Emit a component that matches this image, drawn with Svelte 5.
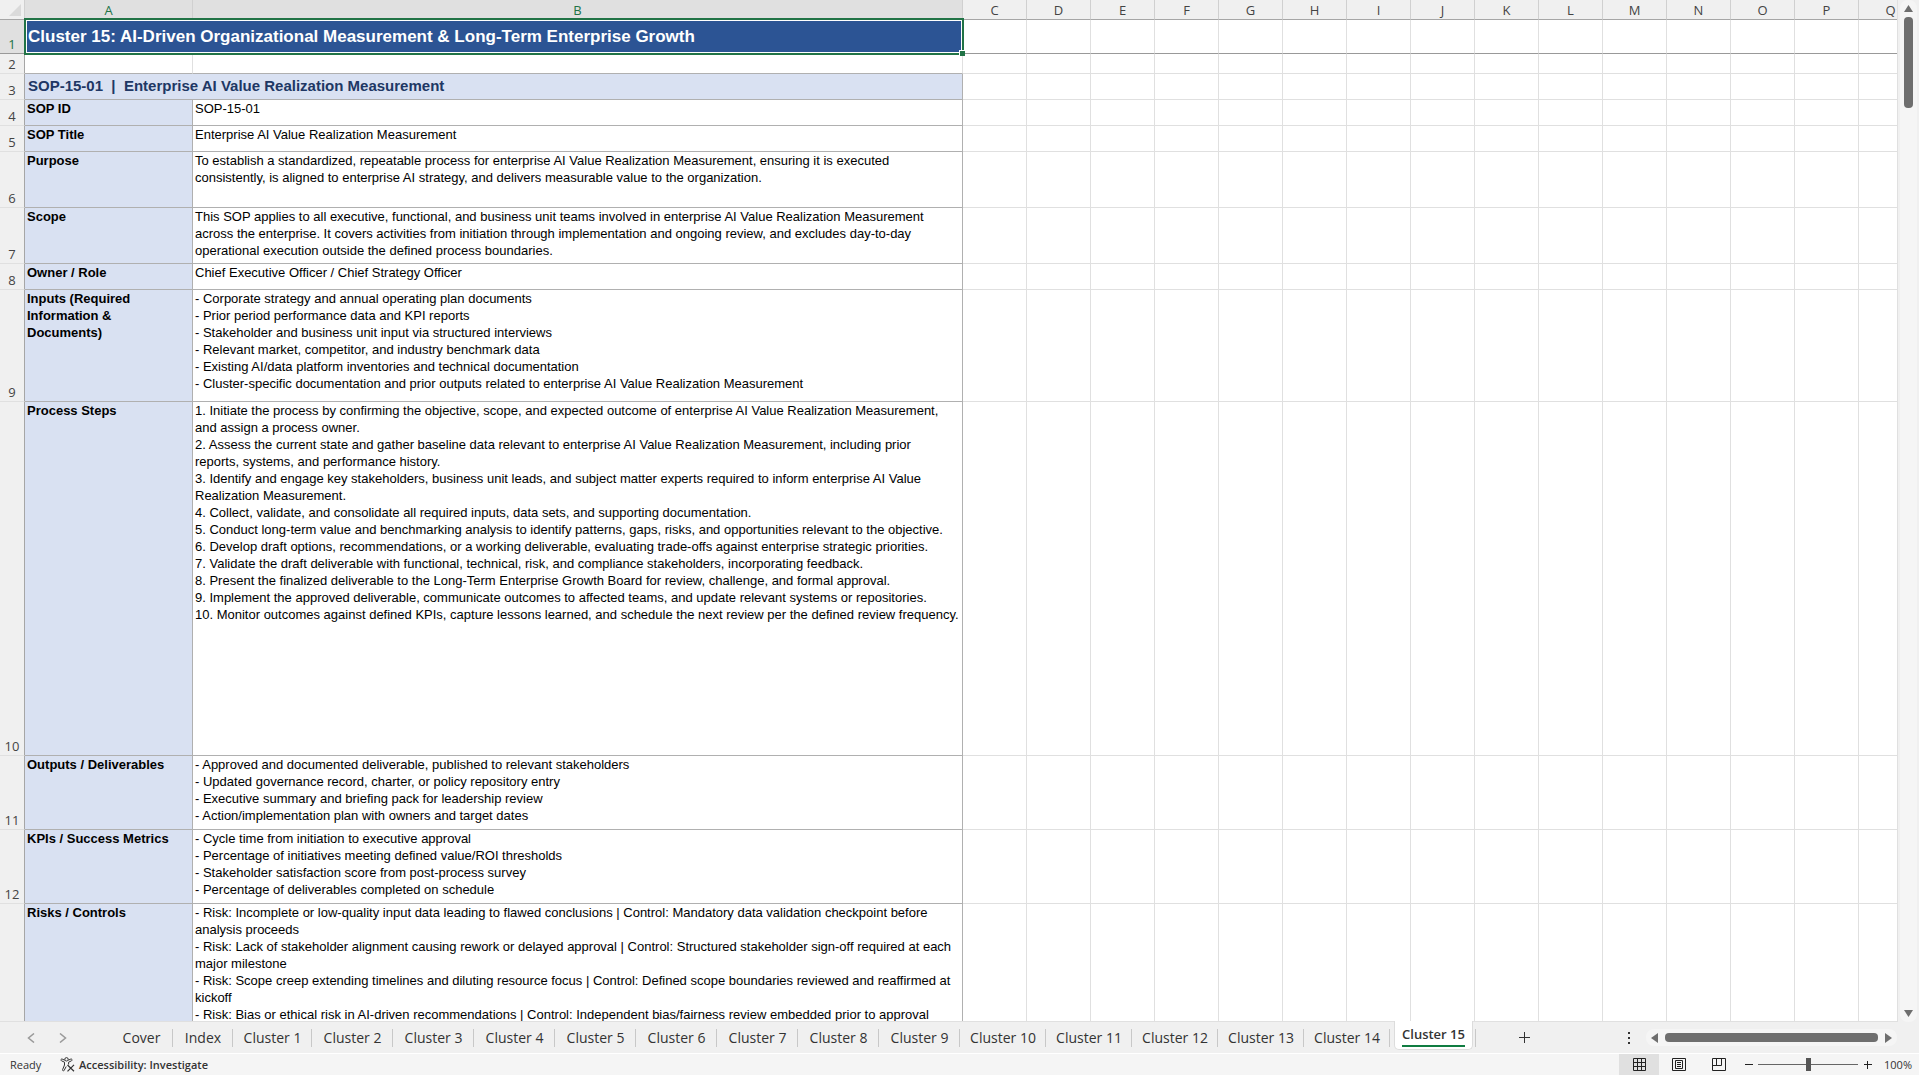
<script>
  const columns = ['C', 'D', 'E', 'F', 'G', 'H', 'I', 'J', 'K', 'L', 'M', 'N', 'O', 'P'];

  const rows = [
    { n: 4, size: 'single', label: 'SOP ID', text: 'SOP-15-01' },
    { n: 5, size: 'single', label: 'SOP Title', text: 'Enterprise AI Value Realization Measurement' },
    {
      n: 6,
      size: 'triple',
      label: 'Purpose',
      text: `To establish a standardized, repeatable process for enterprise AI Value Realization Measurement, ensuring it is executed
consistently, is aligned to enterprise AI strategy, and delivers measurable value to the organization.`
    },
    {
      n: 7,
      size: 'triple',
      label: 'Scope',
      text: `This SOP applies to all executive, functional, and business unit teams involved in enterprise AI Value Realization Measurement
across the enterprise. It covers activities from initiation through implementation and ongoing review, and excludes day-to-day
operational execution outside the defined process boundaries.`
    },
    { n: 8, size: 'single', label: 'Owner / Role', text: 'Chief Executive Officer / Chief Strategy Officer' },
    {
      n: 9,
      size: 'inputs',
      label: 'Inputs (Required\nInformation &\nDocuments)',
      text: `- Corporate strategy and annual operating plan documents
- Prior period performance data and KPI reports
- Stakeholder and business unit input via structured interviews
- Relevant market, competitor, and industry benchmark data
- Existing AI/data platform inventories and technical documentation
- Cluster-specific documentation and prior outputs related to enterprise AI Value Realization Measurement`
    },
    {
      n: 10,
      size: 'steps',
      label: 'Process Steps',
      text: `1. Initiate the process by confirming the objective, scope, and expected outcome of enterprise AI Value Realization Measurement,
and assign a process owner.
2. Assess the current state and gather baseline data relevant to enterprise AI Value Realization Measurement, including prior
reports, systems, and performance history.
3. Identify and engage key stakeholders, business unit leads, and subject matter experts required to inform enterprise AI Value
Realization Measurement.
4. Collect, validate, and consolidate all required inputs, data sets, and supporting documentation.
5. Conduct long-term value and benchmarking analysis to identify patterns, gaps, risks, and opportunities relevant to the objective.
6. Develop draft options, recommendations, or a working deliverable, evaluating trade-offs against enterprise strategic priorities.
7. Validate the draft deliverable with functional, technical, risk, and compliance stakeholders, incorporating feedback.
8. Present the finalized deliverable to the Long-Term Enterprise Growth Board for review, challenge, and formal approval.
9. Implement the approved deliverable, communicate outcomes to affected teams, and update relevant systems or repositories.
10. Monitor outcomes against defined KPIs, capture lessons learned, and schedule the next review per the defined review frequency.`
    },
    {
      n: 11,
      size: 'quad',
      label: 'Outputs / Deliverables',
      text: `- Approved and documented deliverable, published to relevant stakeholders
- Updated governance record, charter, or policy repository entry
- Executive summary and briefing pack for leadership review
- Action/implementation plan with owners and target dates`
    },
    {
      n: 12,
      size: 'quad',
      label: 'KPIs / Success Metrics',
      text: `- Cycle time from initiation to executive approval
- Percentage of initiatives meeting defined value/ROI thresholds
- Stakeholder satisfaction score from post-process survey
- Percentage of deliverables completed on schedule`
    },
    {
      n: 13,
      size: 'risks',
      label: 'Risks / Controls',
      text: `- Risk: Incomplete or low-quality input data leading to flawed conclusions | Control: Mandatory data validation checkpoint before
analysis proceeds
- Risk: Lack of stakeholder alignment causing rework or delayed approval | Control: Structured stakeholder sign-off required at each
major milestone
- Risk: Scope creep extending timelines and diluting resource focus | Control: Defined scope boundaries reviewed and reaffirmed at
kickoff
- Risk: Bias or ethical risk in AI-driven recommendations | Control: Independent bias/fairness review embedded prior to approval`
    }
  ];

  const sheets = ['Cover', 'Index'];
  for (let i = 1; i <= 15; i++) sheets.push(`Cluster ${i}`);

  let active = $state('Cluster 15');
  let zoom = $state(100);
</script>

{#snippet blanks()}
  {#each columns as col (col)}
    <td></td>
  {/each}
  <td></td>
{/snippet}

<div class="app">
  <main class="workspace">
    <div class="sheet">
      <table>
        <colgroup>
          <col class="col-num" />
          <col class="col-a" />
          <col class="col-b" />
          {#each columns as col (col)}
            <col class="col-std" />
          {/each}
          <col class="col-std" />
        </colgroup>
        <thead>
          <tr>
            <th class="corner"><svg width="12" height="12" viewBox="0 0 12 12"><path d="M12 0v12H0z" fill="#dadada" /></svg></th>
            <th class="selected">A</th>
            <th class="selected">B</th>
            {#each columns as col (col)}
              <th>{col}</th>
            {/each}
            <th>Q</th>
          </tr>
        </thead>
        <tbody>
          <tr class="r-title">
            <th class="selected">1</th>
            <td class="title" colspan="2">
              Cluster 15: AI-Driven Organizational Measurement &amp; Long-Term Enterprise Growth
              <span class="selection"></span>
              <span class="handle"></span>
            </td>
            {@render blanks()}
          </tr>
          <tr class="r-blank">
            <th>2</th>
            <td></td>
            <td></td>
            {@render blanks()}
          </tr>
          <tr class="r-single">
            <th>3</th>
            <td class="subtitle" colspan="2">SOP-15-01&nbsp; |&nbsp; Enterprise AI Value Realization Measurement</td>
            {@render blanks()}
          </tr>
          {#each rows as row (row.n)}
            <tr class="r-{row.size}">
              <th>{row.n}</th>
              <td class="label"><div>{row.label}</div></td>
              <td class="text"><div>{row.text}</div></td>
              {@render blanks()}
            </tr>
          {/each}
        </tbody>
      </table>
    </div>
    <div class="vscroll">
      <button aria-label="Scroll up"><svg width="9" height="7" viewBox="0 0 9 7"><path d="M4.500 0L9 7H0z" /></svg></button>
      <div class="vthumb"></div>
      <button aria-label="Scroll down"><svg width="9" height="7" viewBox="0 0 9 7"><path d="M4.500 7L9 0H0z" /></svg></button>
    </div>
  </main>

  <nav class="tabbar">
    <div class="tabnav">
      <button aria-label="Previous sheet"><svg width="8" height="10" viewBox="0 0 8 10"><path d="M7 .5L1.500 5L7 9.500" /></svg></button>
      <button aria-label="Next sheet"><svg width="8" height="10" viewBox="0 0 8 10"><path d="M1 .5L6.500 5L1 9.500" /></svg></button>
    </div>
    <div class="tabs">
      {#each sheets as sheet (sheet)}
        <button class="tab" class:wide={sheet.length > 9} class:active={active === sheet} onclick={() => (active = sheet)}>
          <span>{sheet}</span>
        </button>
      {/each}
    </div>
    <button class="add" aria-label="New sheet"><svg width="11" height="11" viewBox="0 0 11 11"><path d="M5.500 0v11M0 5.500h11" stroke="#333" /></svg></button>
    <div class="spacer"></div>
    <svg class="dots" width="2" height="12" viewBox="0 0 2 12"><path d="M0 0h2v2H0zM0 5h2v2H0zM0 10h2v2H0z" fill="#333" /></svg>
    <div class="hscroll">
      <button aria-label="Scroll left"><svg width="7" height="10" viewBox="0 0 7 10"><path d="M0 5L7 0v10z" /></svg></button>
      <div class="hthumb"></div>
      <button aria-label="Scroll right"><svg width="7" height="10" viewBox="0 0 7 10"><path d="M7 5L0 0v10z" /></svg></button>
    </div>
  </nav>

  <footer class="statusbar">
    <span class="ready">Ready</span>
    <button class="access">
      <svg width="15" height="15" viewBox="0 0 15 15" fill="none" stroke="#333" stroke-width="1">
        <circle cx="6.500" cy="2.300" r="1.700" />
        <path d="M4.800 3.200L2.200 2.100C1 1.700.3 3.200 1.500 3.800L4.500 5.200V8L2.600 12.600C2.200 13.900 3.700 14.400 4.200 13.300L6.200 9.500M8.200 3.200L10.800 2.100C12 1.700 12.700 3.200 11.500 3.800L8.600 5.200V7.500" />
        <path d="M7.500 8L14 14.300M14 7.800L7.500 14.300" stroke-width="1.200" />
      </svg>
      Accessibility: Investigate
    </button>
    <div class="spacer"></div>
    <button class="view on" aria-label="Normal">
      <svg width="13" height="13" viewBox="0 0 13 13"><path d="M.5 .5h12v12H.5zM4.500 .5v12M8.500 .5v12M.5 4.500h12M.5 8.500h12" /></svg>
    </button>
    <button class="view" aria-label="Page layout">
      <svg width="14" height="13" viewBox="0 0 14 13"><path d="M.5 .5h13v12H.5zM3.500 2.500h7v8h-7zM5 4.500h4M5 6.500h4M5 8.500h4" /></svg>
    </button>
    <button class="view" aria-label="Page break preview">
      <svg width="14" height="13" viewBox="0 0 14 13"><path d="M.5 .5h13v12H.5zM4.500 .5v7M9.500 .5v7H.5" /></svg>
    </button>
    <button class="step" aria-label="Zoom out"><svg width="8" height="8" viewBox="0 0 8 8"><path d="M0 3.500h8" /></svg></button>
    <input type="range" min="10" max="190" aria-label="Zoom" bind:value={zoom} />
    <button class="step" aria-label="Zoom in"><svg width="8" height="8" viewBox="0 0 8 8"><path d="M0 3.500h8M3.500 0v8" /></svg></button>
    <span class="percent">{zoom}%</span>
  </footer>
</div>

<style>
:global(body) {
  background: #f0f0f0;
}
.app {
  display: flex;
  flex-direction: column;
  height: 100vh;
  overflow: hidden;
  font-family: "Open Sans", "Noto Sans", sans-serif;
  color: #333;
}
button {
  display: flex;
  align-items: center;
  justify-content: center;
  border: 0;
  padding: 0;
  background: none;
  color: inherit;
  font: inherit;
}
.workspace {
  display: flex;
  flex: 1;
  min-height: 0;
}
.sheet {
  flex: 1;
  min-width: 0;
  overflow: hidden;
  background: #fff;
  border-right: 1px solid #e0e0e0;
  border-bottom: 1px solid #e0e0e0;
}

table {
  table-layout: fixed;
  width: 1923px;
  border-collapse: separate;
  border-spacing: 0;
}
.col-num {
  width: 25px;
}
.col-a {
  width: 168px;
}
.col-b {
  width: 770px;
}
.col-std {
  width: 64px;
}
th, td {
  box-sizing: border-box;
  padding: 0;
  border-right: 1px solid #e0e0e0;
  border-bottom: 1px solid #e0e0e0;
}
th {
  background: #f0f0f0;
  color: #444;
  font-size: 13px;
  font-weight: 400;
  line-height: 18px;
}
thead th {
  height: 20px;
  border-color: #d0d0d0;
  border-bottom-color: #a6a6a6;
}
tbody th {
  vertical-align: bottom;
  border-right-color: #a6a6a6;
}
th.selected {
  background: #e0e0e0;
  color: #217346;
}
th.corner {
  text-align: right;
  vertical-align: bottom;
  padding: 0 3px 3px 0;
  line-height: 0;
}
.r-title {
  height: 34px;
}
.r-title > * {
  border-bottom-color: #999;
}
.r-blank {
  height: 20px;
}
.r-blank td:nth-child(-n + 3) {
  border-bottom-color: #b0b0b0;
}
.r-single {
  height: 26px;
}
.r-triple {
  height: 56px;
}
.r-inputs {
  height: 112px;
}
.r-steps {
  height: 354px;
}
.r-quad {
  height: 74px;
}
.r-risks {
  height: 192px;
}
.title, .subtitle, .label, .text {
  font-family: "Liberation Sans", Arial, sans-serif;
  border-color: #b0b0b0;
}
.title {
  position: relative;
  padding: 0 3px;
  background: #2c5494;
  color: #fff;
  font-size: 17px;
  font-weight: 700;
  line-height: 20px;
}
.selection {
  position: absolute;
  inset: -2px -2px -2px -1px;
  border: 2px solid #217346;
  box-shadow: inset 0 0 0 1px #fff;
}
.handle {
  position: absolute;
  right: -3px;
  bottom: -3px;
  width: 5px;
  height: 5px;
  background: #217346;
  border: solid #fff;
  border-width: 1px 0 0 1px;
}
.subtitle {
  padding: 0 3px 2px;
  background: #d9e1f2;
  color: #203764;
  font-size: 15px;
  font-weight: 700;
}
.label, .text {
  vertical-align: top;
  padding: 0 2px;
  color: #000;
  font-size: 13px;
  line-height: 17px;
  white-space: pre;
}
.label {
  background: #d9e1f2;
  font-weight: 700;
}

.vscroll {
  display: flex;
  flex-direction: column;
  align-items: center;
  justify-content: space-between;
  width: 17px;
  margin: 0 2px;
  border-radius: 8px;
  background: #f5f5f5;
}
.vscroll button {
  height: 17px;
}
.vscroll svg, .hscroll svg {
  fill: #6e6e6e;
}
.vthumb {
  width: 9px;
  height: 91px;
  margin-bottom: auto;
  border-radius: 4px;
  background: #6e6e6e;
}

.tabbar {
  display: flex;
  align-items: center;
  height: 31px;
  border-bottom: 1px solid #fff;
  background: #f0f0f0;
}
.tabnav {
  display: flex;
  gap: 24px;
  width: 83px;
  padding-left: 27px;
}
.tabnav svg {
  fill: none;
  stroke: #999;
  stroke-width: 1.500;
}
.tabs {
  display: flex;
  align-self: stretch;
}
.tab {
  position: relative;
  width: 81px;
  font-size: 14px;
  white-space: nowrap;
}
.tab::after {
  content: "";
  position: absolute;
  right: 0;
  top: 7px;
  width: 1px;
  height: 18px;
  background: #c8c8c8;
}
.tab:nth-child(1) {
  width: 63px;
}
.tab:nth-child(2) {
  width: 60px;
}
.tab:nth-child(3) {
  width: 79px;
}
.tab.wide {
  width: 86px;
}
.tab.active {
  align-items: flex-start;
  width: 79px;
  height: 29px;
  margin: -1px 3px 0 4px;
  background: #fff;
  border: solid #dcdcdc;
  border-width: 0 1px 1px;
  box-sizing: border-box;
  border-radius: 0 0 5px 5px;
  font-size: 13px;
  font-weight: 600;
}
.tab.active::after {
  right: -4px;
  top: 8px;
}
.tab.active span {
  padding-top: 3px;
  line-height: 21px;
  border-bottom: 2px solid #107c41;
}
.add {
  width: 97px;
}
.spacer {
  flex: 1;
}
.dots {
  margin-right: 16px;
}
.hscroll {
  display: flex;
  align-items: center;
  gap: 7px;
  width: 251px;
  height: 17px;
  margin-right: 22px;
  padding: 0 5px;
  box-sizing: border-box;
  border-radius: 8px;
  background: #f5f5f5;
}
.hthumb {
  flex: 1;
  height: 9px;
  border-radius: 4px;
  background: #6e6e6e;
}

.statusbar {
  display: flex;
  align-items: center;
  height: 21px;
  background: #f5f5f5;
  font-size: 11px;
}
.ready {
  width: 50px;
  padding-left: 10px;
}
.access {
  gap: 4px;
  font-weight: 600;
}
.view {
  width: 40px;
  height: 21px;
}
.view.on {
  background: #e0e0e0;
}
.view svg, .step svg {
  fill: none;
  stroke: #222;
}
.step {
  width: 19px;
}
input[type=range] {
  appearance: none;
  width: 100px;
  height: 13px;
  margin: 0;
  background: linear-gradient(#666, #666) center / 100% 1px no-repeat;
}
input[type=range]::-webkit-slider-thumb {
  appearance: none;
  width: 5px;
  height: 13px;
  background: #555;
}
.percent {
  width: 42px;
  text-align: center;
}
</style>
